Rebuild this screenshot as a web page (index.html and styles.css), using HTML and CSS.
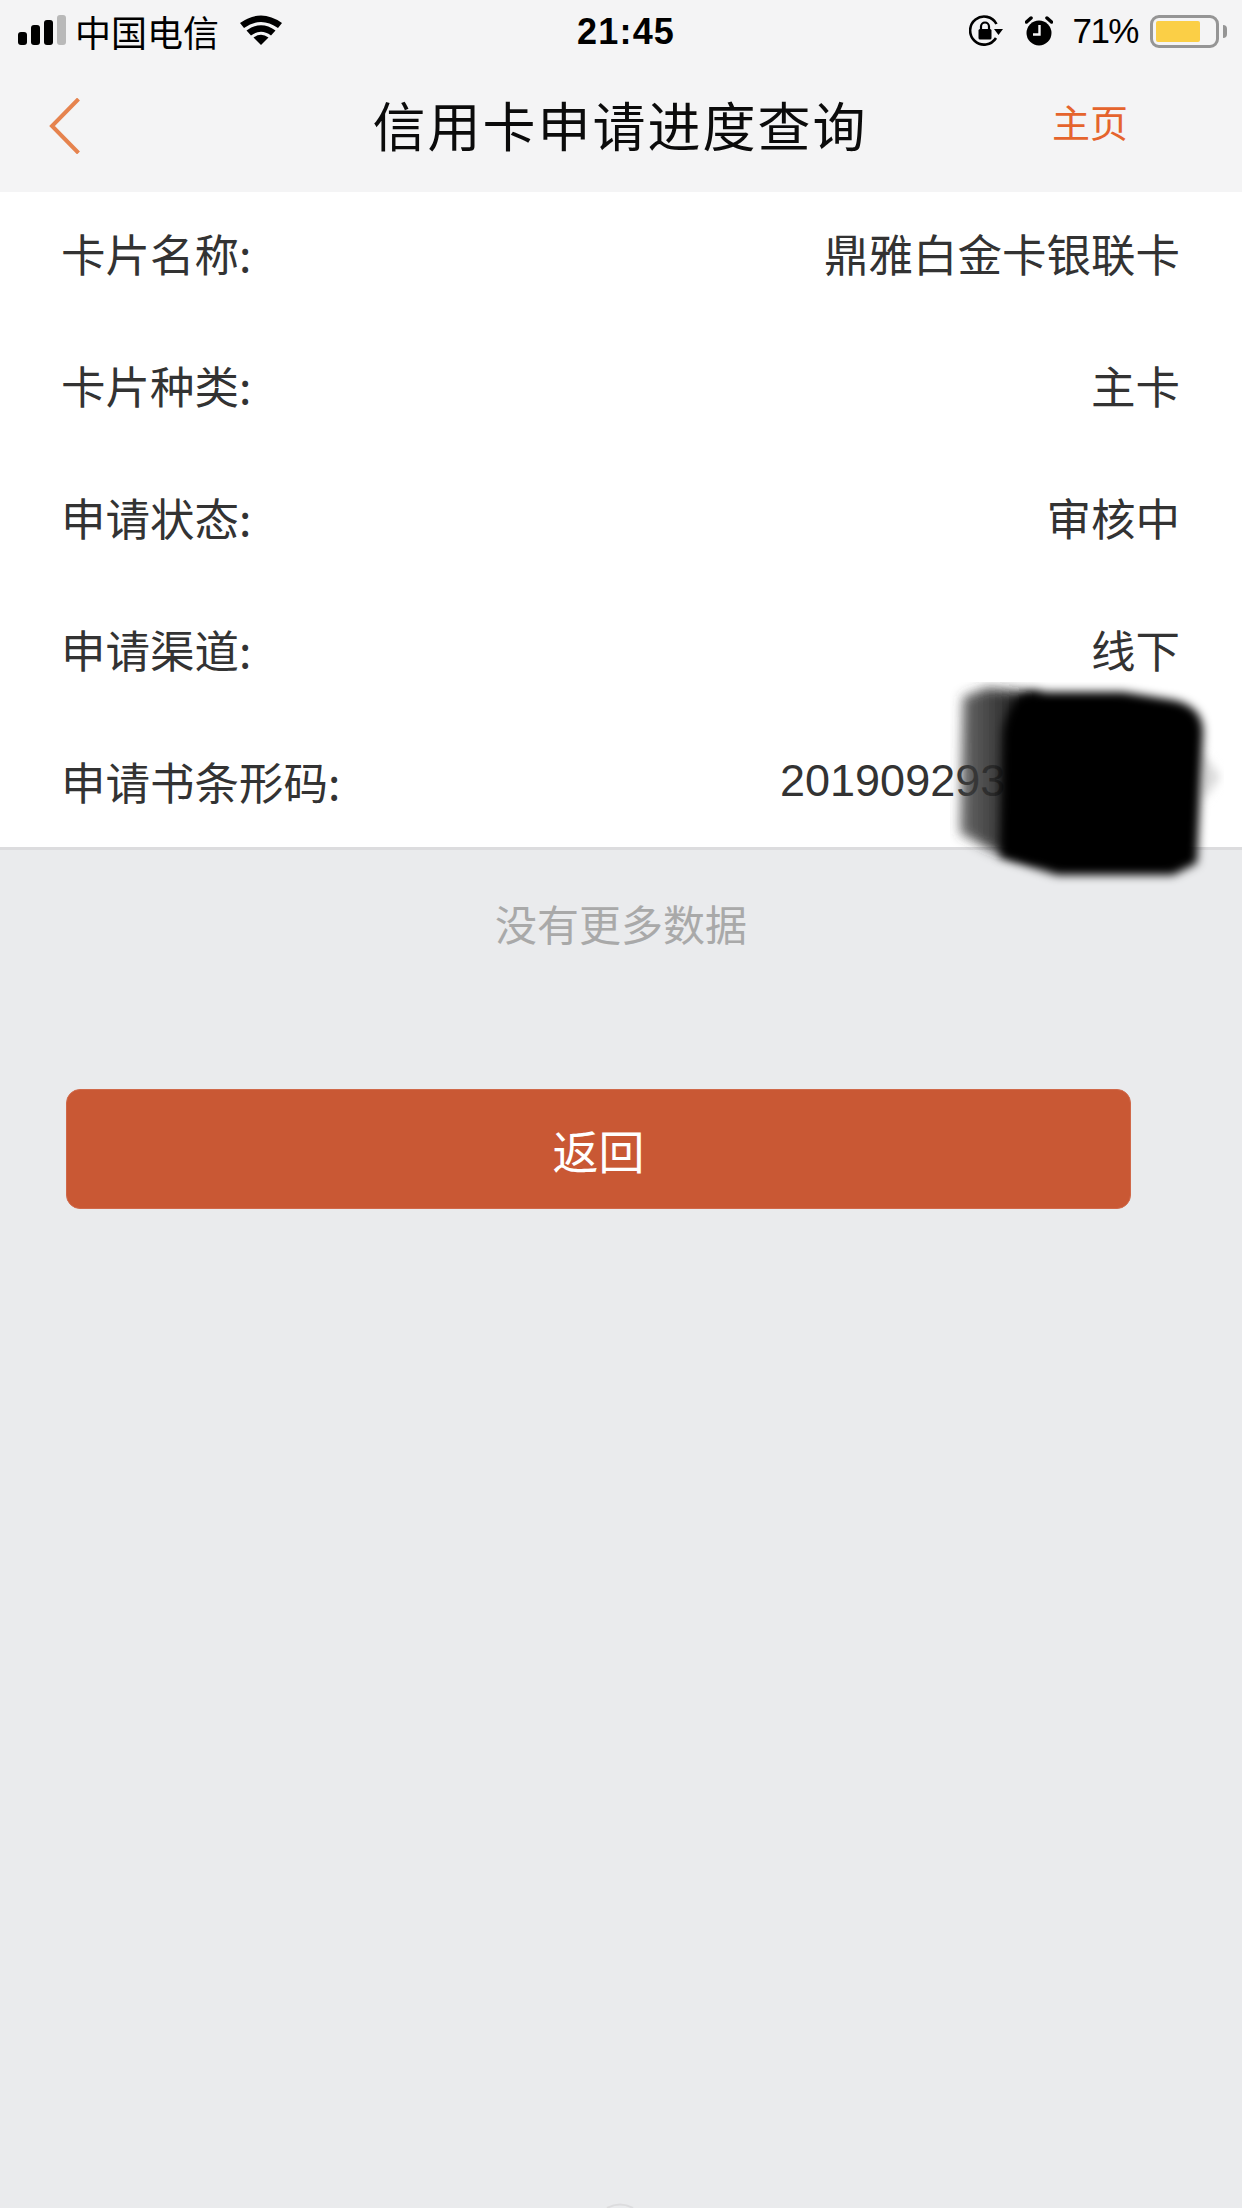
FILE: index.html
```html
<!DOCTYPE html>
<html lang="zh">
<head>
<meta charset="utf-8">
<title>信用卡申请进度查询</title>
<link rel="stylesheet" href="styles.css">
</head>
<body>
<div class="page">
  <header class="top">
    <div class="status">
      <div class="status-left">
        <div class="signal"><i class="s1"></i><i class="s2"></i><i class="s3"></i><i class="s4"></i></div>
        <span class="carrier">中国电信</span>
        <svg class="wifi" width="42" height="32" viewBox="0 0 42 32"><path d="M21 31 L13.500 23.500 Q21 18 28.500 23.500 Z" fill="#000"/><path d="M6.500 16.500 Q21 6 35.500 16.500 L31 21.500 Q21 14 11 21.500 Z" fill="#000"/><path d="M0 9 Q21 -6 42 9 L38 14 Q21 2 4 14 Z" fill="#000"/></svg>
      </div>
      <div class="time">21:45</div>
      <div class="status-right">
        <svg class="lock" width="34" height="32" viewBox="0 0 34 32"><path d="M27 23 A14 14 0 1 1 27.500 9" fill="none" stroke="#000" stroke-width="2.600"/><path d="M25 14 H34 L29.500 20 Z" fill="#000"/><rect x="9.500" y="14" width="13" height="10.500" rx="1.500" fill="#000"/><path d="M12 14.500 V11.500 A4 4 0 0 1 20 11.500 V14.500" fill="none" stroke="#000" stroke-width="2.200"/></svg>
        <svg class="alarm" width="28" height="32" viewBox="0 0 28 32"><circle cx="14" cy="18" r="12.500" fill="#000"/><path d="M1.500 7 L6 3" stroke="#000" stroke-width="3.500" stroke-linecap="round"/><path d="M26.500 7 L22 3" stroke="#000" stroke-width="3.500" stroke-linecap="round"/><path d="M14.500 10 V19.500 H8" fill="none" stroke="#f4f4f5" stroke-width="2.400"/></svg>
        <span class="pct">71%</span>
        <div class="battery"><div class="battery-fill"></div></div>
        <div class="battery-tip"></div>
      </div>
    </div>
    <nav class="nav">
      <svg class="back" width="32" height="56" viewBox="0 0 32 56"><path d="M29.500 1 L3 28 L29.500 55" fill="none" stroke="#e6834e" stroke-width="4"/></svg>
      <h1 class="title">信用卡申请进度查询</h1>
      <a class="home">主页</a>
    </nav>
  </header>

  <main class="list">
    <div class="row"><span>卡片名称:</span><span>鼎雅白金卡银联卡</span></div>
    <div class="row"><span>卡片种类:</span><span>主卡</span></div>
    <div class="row"><span>申请状态:</span><span>审核中</span></div>
    <div class="row"><span>申请渠道:</span><span>线下</span></div>
    <div class="row row-code"><span>申请书条形码:</span><span class="code">201909293</span></div>
  </main>

  <p class="nomore">没有更多数据</p>
  <button class="btn">返回</button>

  <svg class="redact" width="282" height="204" viewBox="0 0 282 204">
    <defs>
      <filter id="soft" x="-20%" y="-20%" width="140%" height="140%"><feGaussianBlur stdDeviation="5"/></filter>
      <filter id="softer" x="-30%" y="-20%" width="160%" height="140%"><feGaussianBlur stdDeviation="6"/></filter>
      <linearGradient id="fade" x1="0" y1="0" x2="1" y2="0"><stop offset="0" stop-color="#444" stop-opacity="0.8"/><stop offset="1" stop-color="#000" stop-opacity="1"/></linearGradient>
    </defs>
    <path d="M253 71 L270 95 L253 119 Z" fill="#d8d8d8" filter="url(#soft)"/>
    <path d="M13 15 L37 6 L90 11 L90 178 L47 171 L10 151 Z" fill="url(#fade)" filter="url(#softer)"/>
    <path d="M53 50 Q60 12 83 10 L173 10 L223 18 Q253 24 253 50 L247 181 L223 193 L107 193 L50 175 Z" fill="#000" filter="url(#soft)"/>
  </svg>
  <svg class="hint" width="32" height="8" viewBox="0 0 32 8"><path d="M3 8 Q16 1 29 8" fill="none" stroke="#dcdcde" stroke-width="2"/></svg>
</div>
</body>
</html>
```
FILE: styles.css
```css
* { box-sizing: border-box; margin: 0; padding: 0; }
html, body { width: 1242px; height: 2208px; overflow: hidden; }
body { background: #eaebed; font-family: "Noto Sans CJK SC", "Liberation Sans", sans-serif; }
.page { position: relative; width: 1242px; height: 2208px; background: #eaebed; }

.top { height: 192px; background: #f4f4f5; display: flex; flex-direction: column; }
.status { height: 62px; display: flex; align-items: center; justify-content: space-between; padding: 0 15px 0 18px; position: relative; color: #000; }
.status-left, .status-right { display: flex; align-items: center; }
.signal { display: flex; align-items: flex-end; gap: 4px; height: 30px; margin-top: -3px; }
.signal i { display: block; width: 9px; border-radius: 3px; background: #000; }
.signal .s1 { height: 13px; }
.signal .s2 { height: 20px; }
.signal .s3 { height: 25px; }
.signal .s4 { height: 30px; background: #b9b9b9; }
.carrier { font-size: 36px; line-height: 40px; margin-left: 9px; font-family: "Noto Sans CJK SC", sans-serif; }
.wifi { margin-left: 21px; margin-top: -2px; }
.time { position: absolute; left: 577px; top: 11px; font: 700 36px/42px "Liberation Sans", sans-serif; letter-spacing: 1.200px; }
.lock { margin-right: 22px; }
.alarm { margin-right: 19px; }
.pct { font: 400 35px/42px "Liberation Sans", sans-serif; margin-right: 12px; letter-spacing: -1.500px; }
.battery { width: 69px; height: 33px; border: 3px solid #959595; border-radius: 9px; padding: 3px; background: #f4f4f5; }
.battery-fill { width: 44px; height: 100%; background: #fbcf46; border-radius: 2px; }
.battery-tip { width: 4px; height: 13px; background: #959595; border-radius: 0 4px 4px 0; margin-left: 4px; }

.nav { flex: 1; position: relative; display: flex; align-items: center; justify-content: center; }
.back { position: absolute; left: 49px; top: 36px; }
.title { font-size: 53px; font-weight: 400; letter-spacing: 2px; line-height: 64px; color: #0b0b0b; margin-bottom: 6px; margin-left: -2px; }
.home { position: absolute; left: 1052px; top: 34px; font-size: 38px; line-height: 50px; color: #e5642d; }

.list { background: #fff; border-bottom: 3px solid #dcdcde; height: 658px; display: grid; grid-template-rows: repeat(4, 132px) 1fr; }
.row { display: flex; align-items: center; justify-content: space-between; padding: 0 62px 10px 61px; font-size: 44.500px; color: #333; }
.row span { line-height: 56px; }
.row-code { justify-content: flex-start; padding-bottom: 6px; }
.code { position: absolute; left: 780px; font: 400 45px/56px "Liberation Sans", sans-serif; color: #333; }

.nomore { text-align: center; font-size: 42px; line-height: 56px; color: #a9a9a9; margin-top: 45px; }
.btn { display: block; margin: 138px 0 0 66px; width: 1065px; height: 120px; border: 1px solid #d0694a; border-radius: 14px; background: #c95834; color: #fff; font: 400 46px/60px "Noto Sans CJK SC", sans-serif; }

.redact { position: absolute; left: 950px; top: 682px; }
.hint { position: absolute; left: 604px; top: 2200px; }
```
